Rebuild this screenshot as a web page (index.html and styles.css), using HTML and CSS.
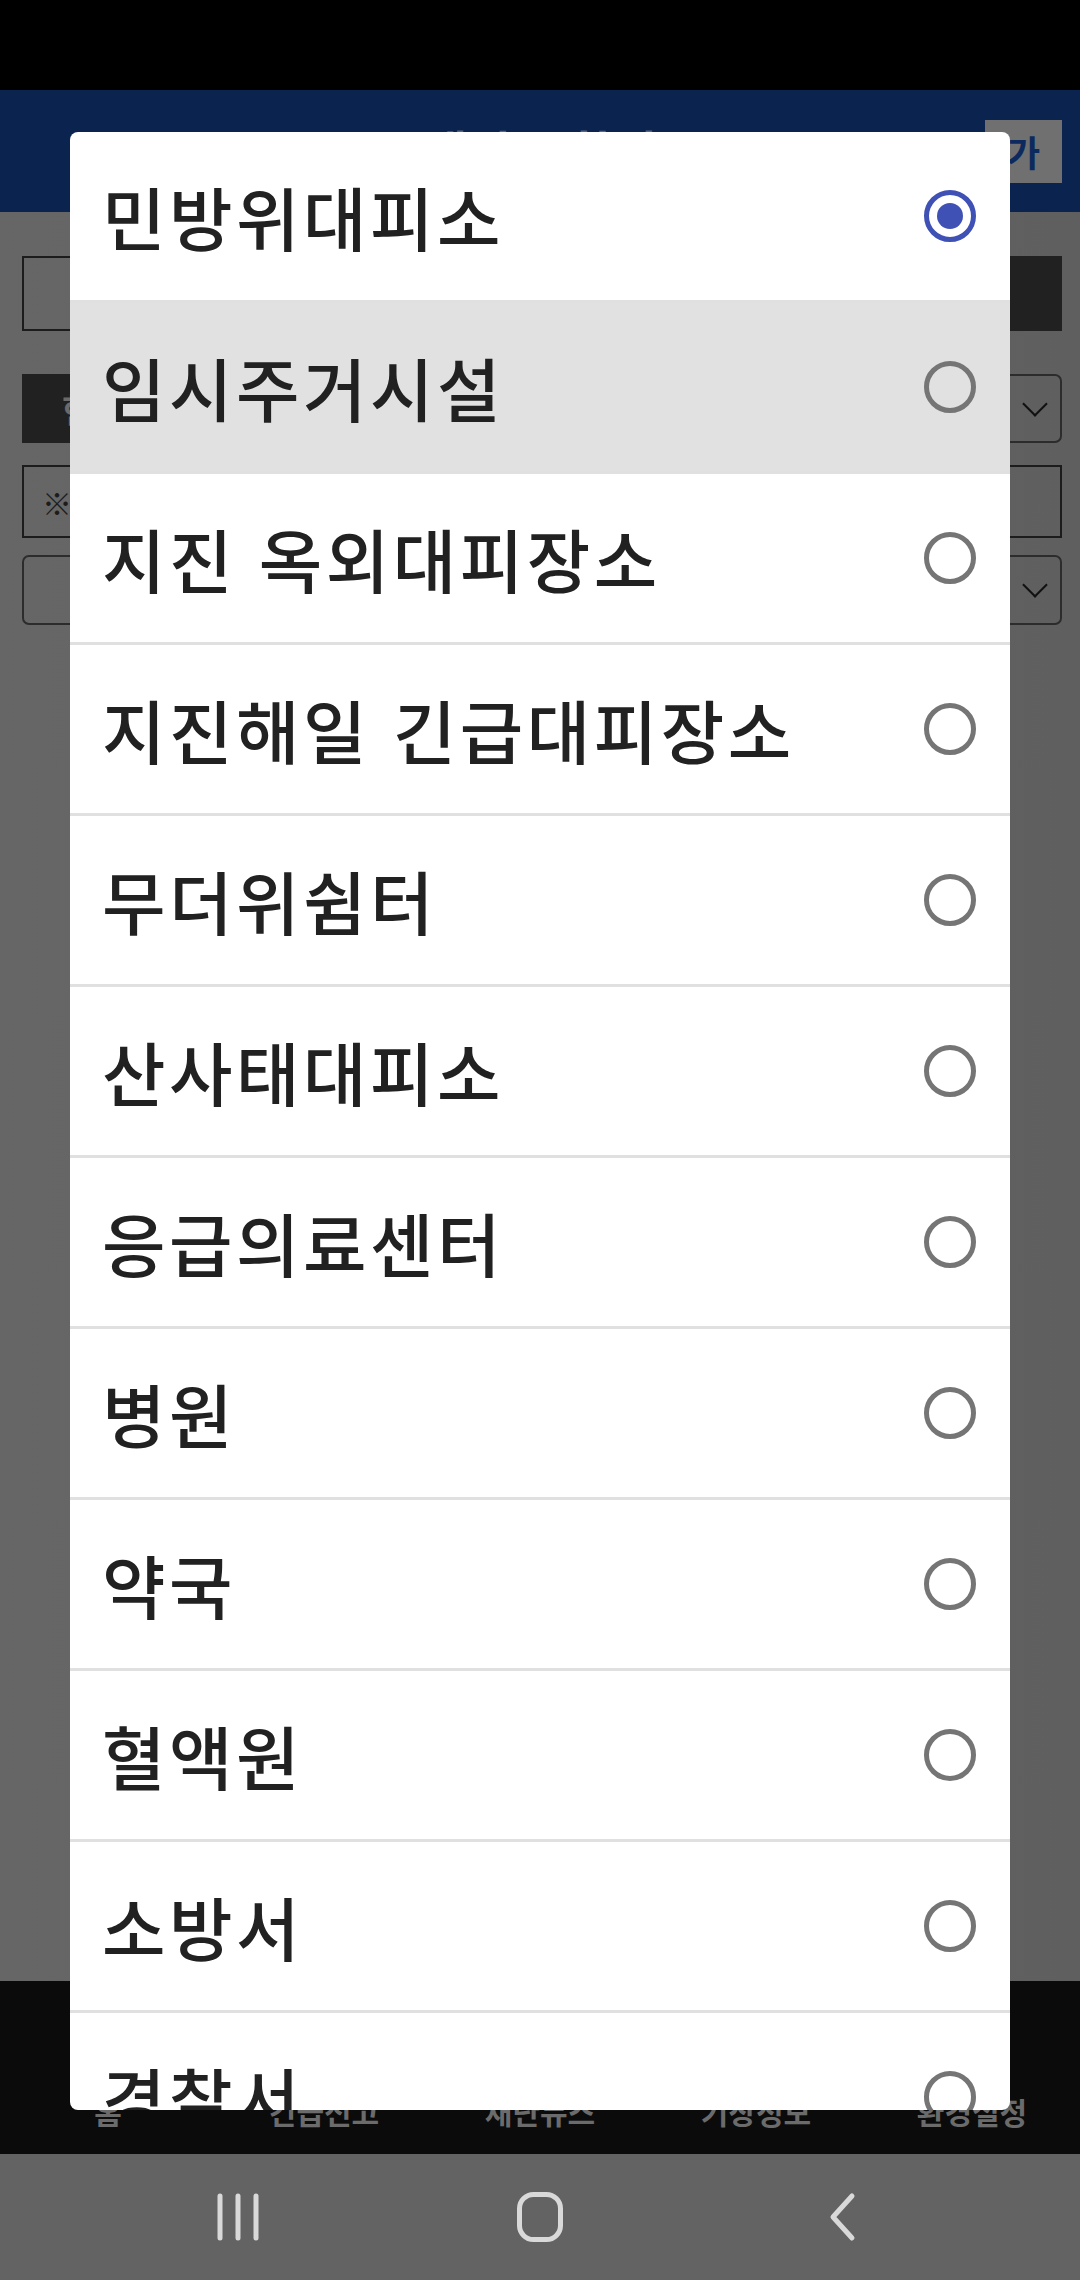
FILE: index.html
```html
<!DOCTYPE html>
<html lang="ko">
<head>
<meta charset="utf-8">
<title>대피소 선택</title>
<link rel="stylesheet" href="styles.css">
</head>
<body>
<div class="screen">
  <div class="statusbar"></div>
  <header class="header">
    <span class="header-title">대피소 찾기</span>
    <button class="font-btn">가</button>
  </header>
  <main class="content">
    <div class="form-row row-a">
      <div class="field field-input"></div>
      <div class="field field-dark"></div>
    </div>
    <div class="form-row row-b">
      <div class="field field-dark field-wide"><span class="field-text">현재 위치</span></div>
      <div class="field field-select"><span class="chev"></span></div>
    </div>
    <div class="form-row row-c">
      <div class="field field-input field-wide"><span class="field-note">※</span></div>
      <div class="field field-input field-short"></div>
    </div>
    <div class="form-row row-d">
      <div class="field field-select field-wide"></div>
      <div class="field field-select"><span class="chev"></span></div>
    </div>
  </main>
  <nav class="bottomnav">
    <div class="nav-item"><span class="nav-label">홈</span></div>
    <div class="nav-item"><span class="nav-label">긴급신고</span></div>
    <div class="nav-item"><span class="nav-label">재난뉴스</span></div>
    <div class="nav-item"><span class="nav-label">기상정보</span></div>
    <div class="nav-item"><span class="nav-label">환경설정</span></div>
  </nav>
  <div class="sysnav">
    <div class="sys-btn">
      <svg width="46" height="50" viewBox="0 0 46 50"><g stroke="#d9d9d9" stroke-width="5" stroke-linecap="round"><line x1="5" y1="4" x2="5" y2="46"/><line x1="23" y1="4" x2="23" y2="46"/><line x1="41" y1="4" x2="41" y2="46"/></g></svg>
    </div>
    <div class="sys-btn">
      <svg width="50" height="50" viewBox="0 0 50 50"><rect x="4.5" y="2.5" width="41" height="45" rx="14" fill="none" stroke="#d9d9d9" stroke-width="5"/></svg>
    </div>
    <div class="sys-btn">
      <svg width="30" height="50" viewBox="0 0 30 50"><polyline points="25,4 6,25 25,46" fill="none" stroke="#d9d9d9" stroke-width="5" stroke-linecap="round" stroke-linejoin="round"/></svg>
    </div>
  </div>

  <div class="dialog">
    <ul class="choice-list">
      <li class="choice"><span class="choice-text">민방위대피소</span><span class="radio radio-on"></span></li>
      <li class="choice choice-pressed"><span class="choice-text">임시주거시설</span><span class="radio"></span></li>
      <li class="choice"><span class="choice-text">지진 옥외대피장소</span><span class="radio"></span></li>
      <li class="choice"><span class="choice-text">지진해일 긴급대피장소</span><span class="radio"></span></li>
      <li class="choice"><span class="choice-text">무더위쉼터</span><span class="radio"></span></li>
      <li class="choice"><span class="choice-text">산사태대피소</span><span class="radio"></span></li>
      <li class="choice"><span class="choice-text">응급의료센터</span><span class="radio"></span></li>
      <li class="choice"><span class="choice-text">병원</span><span class="radio"></span></li>
      <li class="choice"><span class="choice-text">약국</span><span class="radio"></span></li>
      <li class="choice"><span class="choice-text">혈액원</span><span class="radio"></span></li>
      <li class="choice"><span class="choice-text">소방서</span><span class="radio"></span></li>
      <li class="choice"><span class="choice-text">경찰서</span><span class="radio"></span></li>
    </ul>
  </div>
</div>
</body>
</html>
```

FILE: styles.css
```css
* { box-sizing: border-box; }
html, body {
  margin: 0;
  padding: 0;
  background: #000;
}
body {
  font-family: "Noto Sans CJK KR", "Noto Sans", sans-serif;
}
.screen {
  position: relative;
  width: 1080px;
  height: 2280px;
  overflow: hidden;
  display: flex;
  flex-direction: column;
  background: #636363;
}
.statusbar {
  height: 90px;
  flex: none;
  background: #000;
}
.header {
  height: 122px;
  flex: none;
  background: #0a234f;
  display: flex;
  align-items: center;
  justify-content: flex-end;
  padding: 0 18px 0 22px;
  position: relative;
}
.header-title {
  position: absolute;
  left: 0;
  right: 0;
  top: 30px;
  text-align: center;
  color: #59647e;
  font-size: 48px;
  font-weight: 700;
  line-height: 60px;
}
.font-btn {
  width: 77px;
  height: 63px;
  border: 0;
  background: #707070;
  color: #0d2a5e;
  font-family: "Noto Sans CJK KR", sans-serif;
  font-size: 36px;
  font-weight: 700;
  padding: 0;
  position: relative;
  z-index: 1;
}
.content {
  flex: 1;
  background: linear-gradient(90deg, #666 0%, #636363 50%, #5f5f5f 100%);
  padding: 44px 18px 0 22px;
  display: flex;
  flex-direction: column;
}
.form-row {
  display: flex;
  gap: 16px;
}
.row-a { height: 75px; margin-bottom: 43px; }
.row-b { height: 69px; margin-bottom: 22px; }
.row-c { height: 73px; margin-bottom: 17px; }
.row-d { height: 70px; }
.field {
  position: relative;
  display: flex;
  align-items: center;
}
.field-input {
  flex: 1;
  border: 2px solid #1c1c1c;
}
.field-dark {
  width: 200px;
  background: #212121;
}
.field-wide { flex: 1; }
.field-short { width: 200px; flex: none; }
.field-select {
  width: 200px;
  border: 2px solid #2c2c2c;
  border-radius: 7px;
  justify-content: flex-end;
  padding-right: 16px;
}
.field-text {
  color: #6a6a6a;
  font-size: 34px;
  font-weight: 700;
  padding-left: 40px;
}
.field-note {
  color: #1c1c1c;
  font-size: 30px;
  padding-left: 18px;
}
.chev {
  width: 18px;
  height: 18px;
  border-right: 2px solid #111;
  border-bottom: 2px solid #111;
  transform: rotate(45deg);
  margin-top: -10px;
}
.bottomnav {
  height: 173px;
  flex: none;
  background: #0b0b0b;
  display: flex;
}
.nav-item {
  flex: 1;
  display: flex;
  align-items: flex-end;
  justify-content: center;
  padding-bottom: 25px;
}
.nav-label {
  color: #6b6b6b;
  font-size: 30px;
  font-weight: 700;
  line-height: 36px;
}
.sysnav {
  height: 126px;
  flex: none;
  background: #636363;
  display: flex;
  justify-content: center;
  align-items: center;
}
.sys-btn {
  width: 302px;
  display: flex;
  justify-content: center;
  align-items: center;
}
.dialog {
  position: absolute;
  left: 70px;
  top: 132px;
  width: 940px;
  height: 1978px;
  background: #fff;
  border-radius: 8px;
  overflow: hidden;
  z-index: 2;
}
.choice-list {
  list-style: none;
  margin: 0;
  padding: 0;
}
.choice {
  height: 171px;
  border-bottom: 3px solid #e0e0e0;
  display: flex;
  align-items: center;
  justify-content: space-between;
  padding: 0 34px 0 32px;
}
.choice-pressed {
  background: #e1e1e1;
}
.choice-text {
  color: #212121;
  font-size: 69px;
  line-height: 80px;
  font-weight: 500;
  letter-spacing: 3.5px;
}
.radio {
  width: 52px;
  height: 52px;
  border: 5px solid #757575;
  border-radius: 50%;
  display: flex;
  align-items: center;
  justify-content: center;
  flex: none;
}
.radio-on {
  border-color: #3f51b5;
}
.radio-on::after {
  content: "";
  width: 26px;
  height: 26px;
  border-radius: 50%;
  background: #3f51b5;
}
```
